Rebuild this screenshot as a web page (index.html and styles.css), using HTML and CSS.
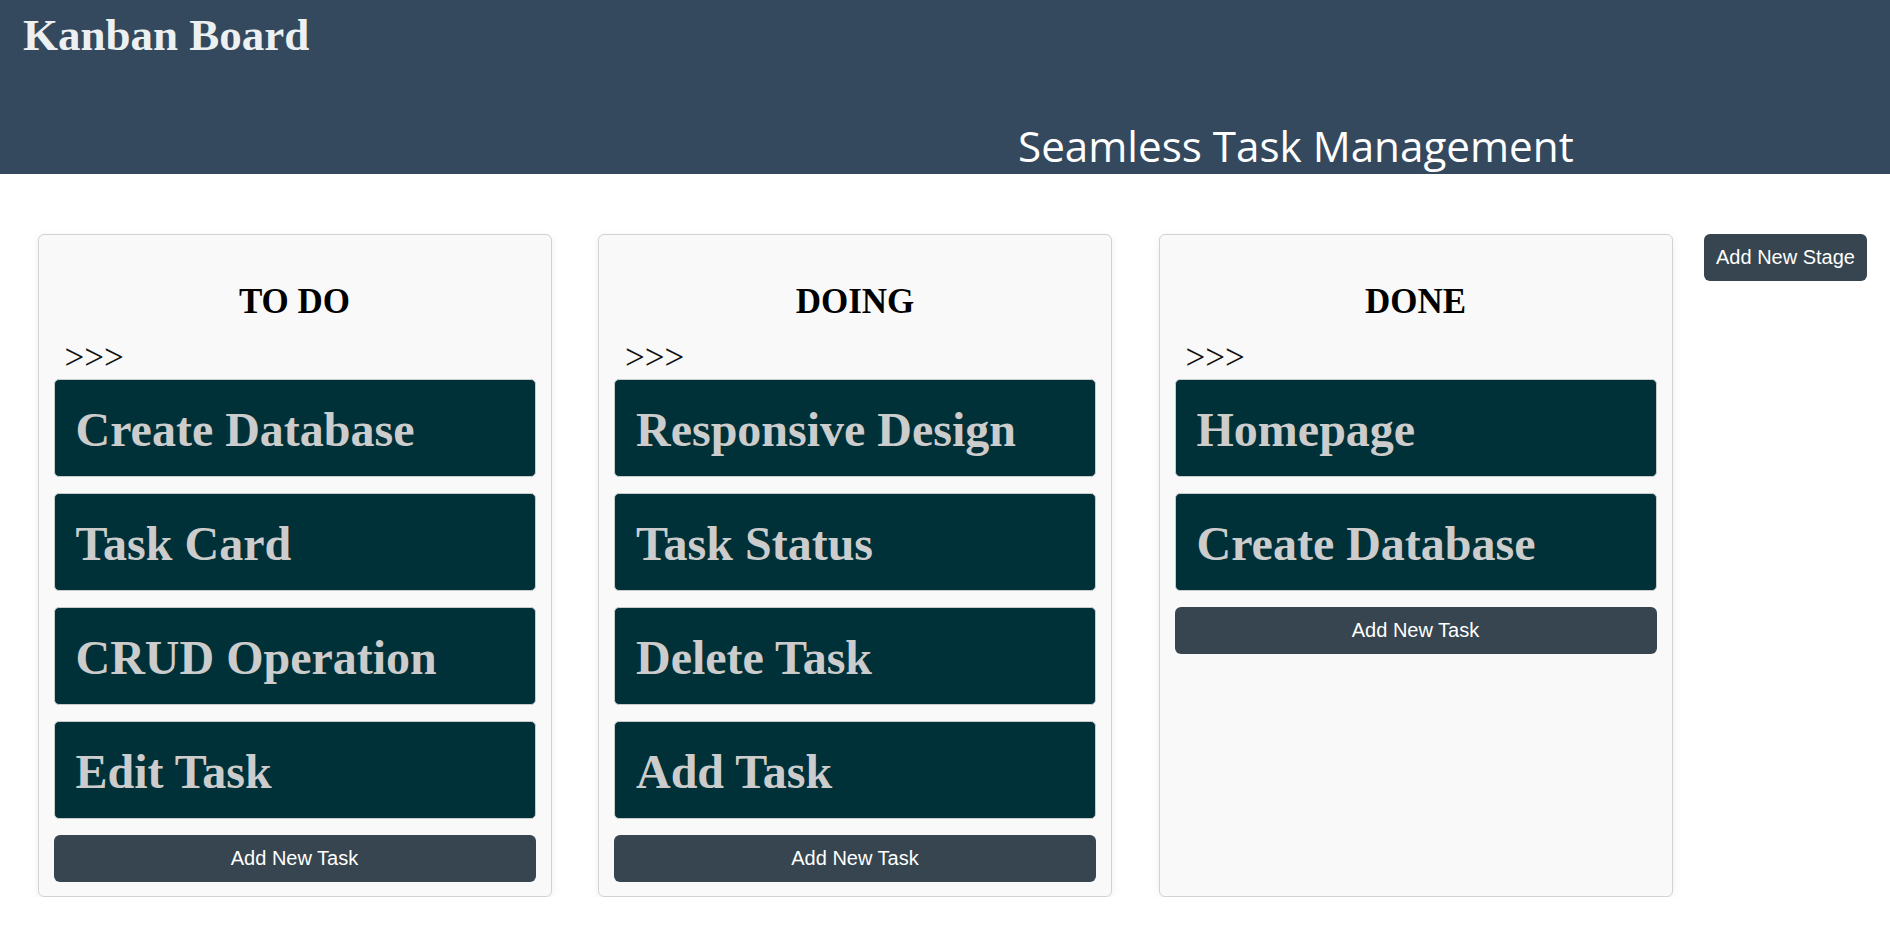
FILE: index.html
```html
<!DOCTYPE html>
<html lang="en">
<head>
<meta charset="utf-8">
<title>Kanban Board</title>
<link rel="stylesheet" href="styles.css">
</head>
<body>
<header class="topbar">
  <h1 class="brand">Kanban Board</h1>
  <div class="tagline">Seamless Task Management</div>
</header>
<main class="board">
  <section class="stage">
    <h2 class="stage-title">TO DO</h2>
    <div class="stage-arrows">&gt;&gt;&gt;</div>
    <div class="cards">
      <div class="card">Create Database</div>
      <div class="card">Task Card</div>
      <div class="card">CRUD Operation</div>
      <div class="card">Edit Task</div>
      <button class="btn btn-task">Add New Task</button>
    </div>
  </section>
  <section class="stage">
    <h2 class="stage-title">DOING</h2>
    <div class="stage-arrows">&gt;&gt;&gt;</div>
    <div class="cards">
      <div class="card">Responsive Design</div>
      <div class="card">Task Status</div>
      <div class="card">Delete Task</div>
      <div class="card">Add Task</div>
      <button class="btn btn-task">Add New Task</button>
    </div>
  </section>
  <section class="stage">
    <h2 class="stage-title">DONE</h2>
    <div class="stage-arrows">&gt;&gt;&gt;</div>
    <div class="cards">
      <div class="card">Homepage</div>
      <div class="card">Create Database</div>
      <button class="btn btn-task">Add New Task</button>
    </div>
  </section>
  <button class="btn btn-stage">Add New Stage</button>
</main>
</body>
</html>
```
FILE: styles.css
```css
* { box-sizing: border-box; }
html, body { margin: 0; padding: 0; background: #ffffff; }
body { font-family: "Liberation Serif", "Times New Roman", serif; }

.topbar {
  background: #34495e;
  height: 174px;
  overflow: hidden;
  padding: 10px 0 0 23px;
  display: flex;
  flex-direction: column;
}
.brand {
  margin: 0;
  font-family: "Liberation Serif", "Times New Roman", serif;
  font-weight: 700;
  font-size: 45px;
  line-height: 51px;
  color: #ecf0f1;
}
.tagline {
  margin: 56px 0 0 995px;
  font-family: "Open Sans", "Noto Sans", sans-serif;
  font-weight: 400;
  font-size: 42.2px;
  line-height: 58px;
  color: #ffffff;
  white-space: nowrap;
}

.board {
  display: flex;
  align-items: stretch;
  padding: 60.3px 0 0 37.5px;
  gap: 46.5px;
}
.stage {
  width: 514px;
  flex: none;
  background: #f9f9f9;
  border: 1px solid #d2d2d2;
  border-radius: 6px;
  box-shadow: 0 2px 8px rgba(0, 0, 0, 0.07);
  padding: 15px 15px 14px;
  display: flex;
  flex-direction: column;
}
.stage-title {
  margin: 32px 0 0;
  text-align: center;
  font-family: "Liberation Serif", "Times New Roman", serif;
  font-weight: 700;
  font-size: 35px;
  line-height: 39px;
  color: #000;
}
.stage-arrows {
  margin: 17px 0 2px;
  padding-left: 11px;
  font-family: "Liberation Serif", "Times New Roman", serif;
  font-size: 35px;
  line-height: 39px;
  color: #111;
}
.cards {
  display: flex;
  flex-direction: column;
  gap: 16.5px;
}
.card {
  height: 97.5px;
  background: #013138;
  border: 1px solid #c9cccd;
  border-radius: 5px;
  padding: 23px 20px 0 21px;
  font-family: "Liberation Serif", "Times New Roman", serif;
  font-weight: 700;
  font-size: 48px;
  line-height: 53px;
  color: #cccccc;
  white-space: nowrap;
}
.btn {
  border: none;
  border-radius: 6px;
  background: #36454f;
  color: #ffffff;
  font-family: "Liberation Sans", Arial, sans-serif;
  font-size: 20px;
  line-height: 23px;
  cursor: pointer;
}
.btn-task {
  height: 46.8px;
  width: 100%;
  margin-top: -0.5px;
  padding: 0;
}
.btn-stage {
  align-self: flex-start;
  height: 46.7px;
  margin-left: -15px;
  padding: 0 12px;
  white-space: nowrap;
}
```
